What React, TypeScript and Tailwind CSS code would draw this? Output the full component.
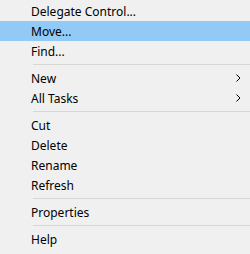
const groups: { label: string; sub?: boolean; active?: boolean }[][] = [
  [{ label: 'Delegate Control...' }, { label: 'Move...', active: true }, { label: 'Find...' }],
  [{ label: 'New', sub: true }, { label: 'All Tasks', sub: true }],
  [{ label: 'Cut' }, { label: 'Delete' }, { label: 'Rename' }, { label: 'Refresh' }],
  [{ label: 'Properties' }],
  [{ label: 'Help' }],
];

function Chevron() {
  return (
    <svg width="5" height="8" viewBox="0 0 5 8" className="absolute right-[9px] top-[6px]">
      <path d="M0.5 0.5 L4 4 L0.5 7.5" fill="none" stroke="#000" strokeWidth="1" />
    </svg>
  );
}

export default function App() {
  return (
    <div
      className="w-[250px] h-[254px] bg-[#f0f0f0] pt-px text-[12px] text-black"
      style={{ fontFamily: '"Noto Sans", sans-serif' }}
    >
      {groups.map((g, gi) => (
        <div key={gi}>
          {gi > 0 && (
            <div className="h-[7px] flex items-center pl-[33px]">
              <div className="h-px w-full bg-[#d7d7d7]" />
            </div>
          )}
          {g.map((item) => (
            <div
              key={item.label}
              className={`relative h-5 flex items-center pl-[31px] pt-px leading-none ${item.active ? 'bg-[#91c9f7]' : ''}`}
            >
              {item.label}
              {item.sub && <Chevron />}
            </div>
          ))}
        </div>
      ))}
    </div>
  );
}
